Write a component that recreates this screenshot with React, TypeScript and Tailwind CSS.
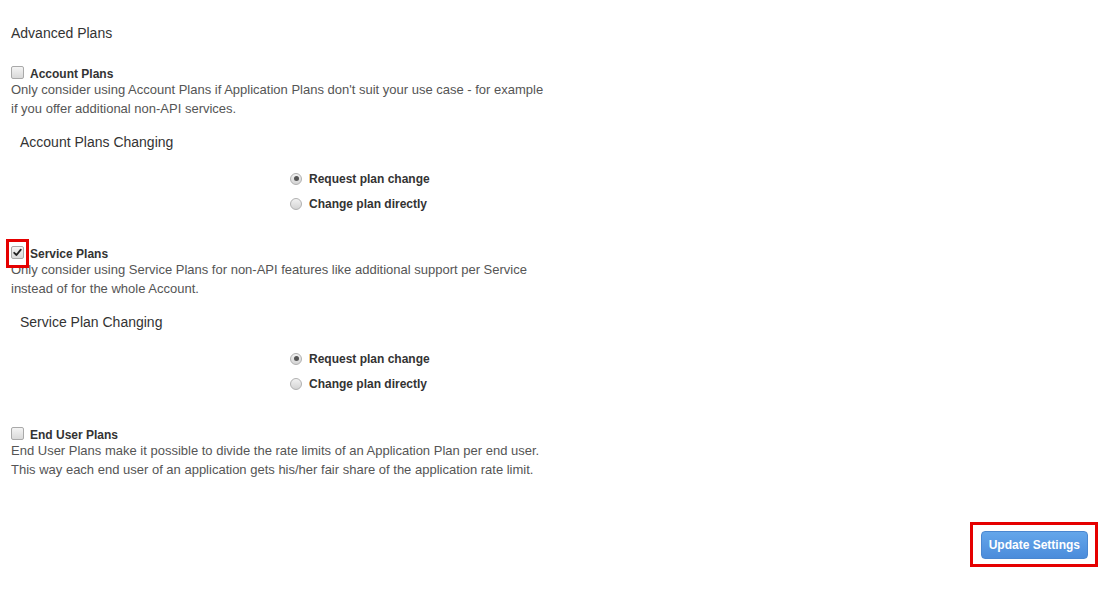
import React from "react";

function Checkbox({ checked }: { checked?: boolean }) {
  return (
    <span className="inline-flex w-[13px] h-[13px] shrink-0 items-center justify-center rounded-[2px] border border-[#a9a9a9] bg-gradient-to-b from-[#f4f4f4] to-[#d9d9d9]">
      {checked && (
        <svg width="9" height="9" viewBox="0 0 9 9">
          <path d="M1.2 4.8 L3.5 7 L7.8 1.6" fill="none" stroke="#222" strokeWidth="1.8" strokeLinecap="round" strokeLinejoin="round" />
        </svg>
      )}
    </span>
  );
}

function Radio({ checked }: { checked?: boolean }) {
  return (
    <span className="inline-flex w-[12px] h-[12px] shrink-0 items-center justify-center rounded-full border border-[#b0b0b0] bg-gradient-to-b from-[#f2f2f2] to-[#d4d4d4]">
      {checked && <span className="w-[5px] h-[5px] rounded-full bg-[#555]" />}
    </span>
  );
}

function PlanSection({
  title,
  lines,
  checked,
  highlight,
  mt,
}: {
  title: string;
  lines: string[];
  checked?: boolean;
  highlight?: boolean;
  mt: string;
}) {
  return (
    <div className={mt}>
      <div className="flex items-center h-[12px] leading-[12px]">
        <span className="relative inline-flex -mt-[4px]">
          <Checkbox checked={checked} />
          {highlight && (
            <span className="absolute left-[-5px] top-[-7px] w-[23px] h-[29px] border-[3px] border-[#e50000]" />
          )}
        </span>
        <span className="ml-[6px] text-[12px] font-bold text-[#333]">{title}</span>
      </div>
      <div className="text-[13px] leading-[19px] text-[#555]">
        {lines.map((l) => (
          <div key={l}>{l}</div>
        ))}
      </div>
    </div>
  );
}

function Changing({ title, mt }: { title: string; mt: string }) {
  return (
    <div className={mt}>
      <div className="ml-[9px] text-[14px] leading-[20px] text-[#333]">{title}</div>
      <div className="mt-[14px] pl-[279px]">
        <div className="flex items-center h-[25px]">
          <Radio checked />
          <span className="ml-[7px] text-[12px] font-bold text-[#333]">Request plan change</span>
        </div>
        <div className="flex items-center h-[25px]">
          <Radio />
          <span className="ml-[7px] text-[12px] font-bold text-[#333]">Change plan directly</span>
        </div>
      </div>
    </div>
  );
}

export default function App() {
  return (
    <div
      className="w-[1109px] h-[591px] bg-white pl-[11px] pr-[11px] pt-[23px] overflow-hidden"
      style={{ fontFamily: '"Liberation Sans", Arial, sans-serif' }}
    >
      <div className="text-[14px] leading-[20px] text-[#333]">Advanced Plans</div>

      <PlanSection
        mt="mt-[25px]"
        title="Account Plans"
        lines={[
          "Only consider using Account Plans if Application Plans don't suit your use case - for example",
          "if you offer additional non-API services.",
        ]}
      />

      <Changing title="Account Plans Changing" mt="mt-[14px]" />

      <PlanSection
        mt="mt-[32px]"
        title="Service Plans"
        checked
        highlight
        lines={[
          "Only consider using Service Plans for non-API features like additional support per Service",
          "instead of for the whole Account.",
        ]}
      />

      <Changing title="Service Plan Changing" mt="mt-[14px]" />

      <PlanSection
        mt="mt-[33px]"
        title="End User Plans"
        lines={[
          "End User Plans make it possible to divide the rate limits of an Application Plan per end user.",
          "This way each end user of an application gets his/her fair share of the application rate limit.",
        ]}
      />

      <div className="mt-[43px] flex justify-end">
        <div className="border-[3px] border-[#e50000] pl-[8px] pr-[7px] pt-[6px] pb-[5px]">
          <button className="h-[28px] px-[7px] rounded-[4px] border border-[#4a87d0] bg-gradient-to-b from-[#64a6ea] to-[#4b8cdb] text-white text-[12px] font-bold leading-none">
            Update Settings
          </button>
        </div>
      </div>
    </div>
  );
}
